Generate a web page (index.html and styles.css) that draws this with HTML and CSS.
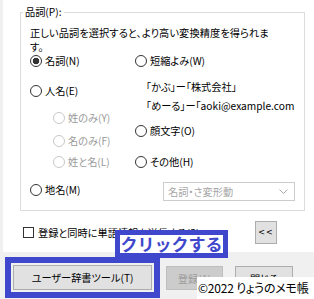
FILE: index.html
```html
<!DOCTYPE html>
<html>
<head>
    <title>単語の登録</title>
    <link rel="stylesheet" href="styles.css">
</head>
<body>
    <div class="dialog">
        <div class="panel">
            <fieldset class="group">
                <legend>品詞(P):</legend>
                <p class="desc">正しい品詞を選択すると、より高い変換精度を得られま<br>す。</p>
                <div class="cols">
                    <div class="col col-left">
                        <div class="row"><span class="radio checked"></span>名詞(N)</div>
                        <div class="row gap-16"><span class="radio"></span>人名(E)</div>
                        <div class="row sub gap-13"><span class="radio"></span>姓のみ(Y)</div>
                        <div class="row sub gap-9"><span class="radio"></span>名のみ(F)</div>
                        <div class="row sub gap-7"><span class="radio"></span>姓と名(L)</div>
                        <div class="row gap-14"><span class="radio"></span>地名(M)</div>
                    </div>
                    <div class="col col-right">
                        <div class="row"><span class="radio"></span>短縮よみ(W)</div>
                        <div class="examples">
                            <div>「かぶ」ー「株式会社」</div>
                            <div>「めーる」ー「aoki@example.com</div>
                        </div>
                        <div class="row gap-9"><span class="radio"></span>顔文字(O)</div>
                        <div class="row gap-17"><span class="radio"></span>その他(H)</div>
                        <div class="select">
                            <span>名詞・さ変形動</span>
                            <svg width="9" height="6" viewBox="0 0 9 6"><polyline points="0.5,0.5 4.5,4.5 8.5,0.5" fill="none" stroke="#a8a8a8" stroke-width="1"/></svg>
                        </div>
                    </div>
                </div>
            </fieldset>
            <div class="options">
                <div class="check"><span class="box"></span><span class="check-text">登録と同時に単語情報を送信する(S)</span></div>
                <button class="toggle">&lt;&lt;</button>
            </div>
        </div>
        <div class="footer">
            <div class="highlight">
                <button class="btn btn-tool">ユーザー辞書ツール(T)</button>
            </div>
            <button class="btn btn-small btn-register" disabled>登録(A)</button>
            <button class="btn btn-small btn-close">閉じる</button>
        </div>

        <!-- annotations drawn over the dialog -->
        <div class="callout">クリックする</div>
        <div class="credit">©2022 りょうのメモ帳</div>
    </div>
</body>
</html>
```

FILE: styles.css
```css
body {
    margin: 0;
    font-family: "Noto Sans CJK JP", sans-serif;
    font-feature-settings: "palt";
    font-size: 10.2px;
    color: #000;
}

.dialog {
    position: relative;
    width: 314px;
    height: 299px;
    overflow: hidden;
    background: #f0f0f0;
}

.panel {
    margin-left: 3px;
    height: 252px;
    box-sizing: border-box;
    padding: 5px 9px 0 17px;
    background: #fff;
}

.group {
    margin: 0;
    padding: 0 0 9px 0;
    border: 1px solid #dcdcdc;
}

.group legend {
    margin-left: 2px;
    padding: 0 2px;
    line-height: 14px;
}

.desc {
    margin: 7px 0 0 9px;
    line-height: 14px;
    letter-spacing: 0.1px;
    white-space: nowrap;
}

.cols {
    display: flex;
    padding-left: 9px;
}

.col {
    display: flex;
    flex-direction: column;
}

.col-left {
    width: 105px;
}

.col-right {
    flex: 1;
}

.row {
    display: flex;
    align-items: center;
    gap: 3px;
    line-height: 14px;
    white-space: nowrap;
}

.row.sub {
    margin-left: 23px;
    color: #9a9a9a;
}

.gap-7 { margin-top: 7px; }
.gap-9 { margin-top: 9px; }
.gap-13 { margin-top: 13px; }
.gap-14 { margin-top: 14px; }
.gap-16 { margin-top: 16px; }
.gap-17 { margin-top: 17px; }

.radio {
    width: 12px;
    height: 12px;
    box-sizing: border-box;
    border: 1px solid #333;
    border-radius: 50%;
    flex-shrink: 0;
}

.radio.checked {
    background: radial-gradient(circle, #333 0 3px, transparent 3.6px);
}

.row.sub .radio {
    border-color: #c8c8c8;
}

.examples {
    margin: 9px 0 0 11px;
    line-height: 19px;
    white-space: nowrap;
}

.select {
    display: flex;
    align-items: center;
    justify-content: space-between;
    margin: 13px 0 0 28px;
    width: 132px;
    height: 19px;
    box-sizing: border-box;
    padding: 0 6px 0 4px;
    border: 1px solid #cccccc;
    color: #a6a6a6;
}

.options {
    display: flex;
    align-items: center;
    height: 39px;
    box-sizing: border-box;
    padding: 4px 28px 0 3px;
}

.check {
    display: flex;
    align-items: center;
    gap: 4px;
    white-space: nowrap;
}

.check .box {
    width: 11px;
    height: 11px;
    box-sizing: border-box;
    border: 1px solid #333;
}

.check-text {
    width: 180px;
    overflow: hidden;
}

.toggle {
    margin-left: auto;
    width: 22px;
    height: 23px;
    padding: 0;
    border: 1px solid #adadad;
    background: #e1e1e1;
    font-family: "DejaVu Sans", sans-serif;
    font-size: 8px;
    letter-spacing: 1px;
    color: #000;
}

.footer {
    display: flex;
    align-items: flex-start;
    padding: 5px 0 0 5px;
}

.highlight {
    padding: 2px;
    border: 6px solid #3f48cc;
}

.btn {
    height: 25px;
    padding: 0;
    border: 1px solid #adadad;
    background: #e1e1e1;
    font-family: inherit;
    font-feature-settings: "palt";
    font-size: 10.2px;
    color: #000;
}

.btn-tool {
    display: block;
    width: 139px;
}

.btn-small {
    margin-top: 9px;
    width: 57px;
    height: 24px;
}

.btn-register {
    margin-left: 6px;
}

.btn-register:disabled {
    background: #cccccc;
    border-color: #bfbfbf;
    color: #9d9d9d;
}

.btn-close {
    margin-left: 12px;
    width: 58px;
}

.callout {
    position: absolute;
    left: 115px;
    top: 230px;
    width: 113px;
    height: 28px;
    box-sizing: border-box;
    border: 5px solid #3f48cc;
    background: #fff;
    color: #3f48cc;
    font-feature-settings: normal;
    font-size: 17px;
    font-weight: bold;
    line-height: 18px;
    text-align: center;
}

.credit {
    position: absolute;
    right: 0;
    bottom: 0;
    width: 117px;
    height: 22px;
    box-sizing: border-box;
    padding-left: 1px;
    background: #fff;
    font-size: 12px;
    letter-spacing: -0.2px;
    line-height: 22px;
    white-space: nowrap;
}
```
